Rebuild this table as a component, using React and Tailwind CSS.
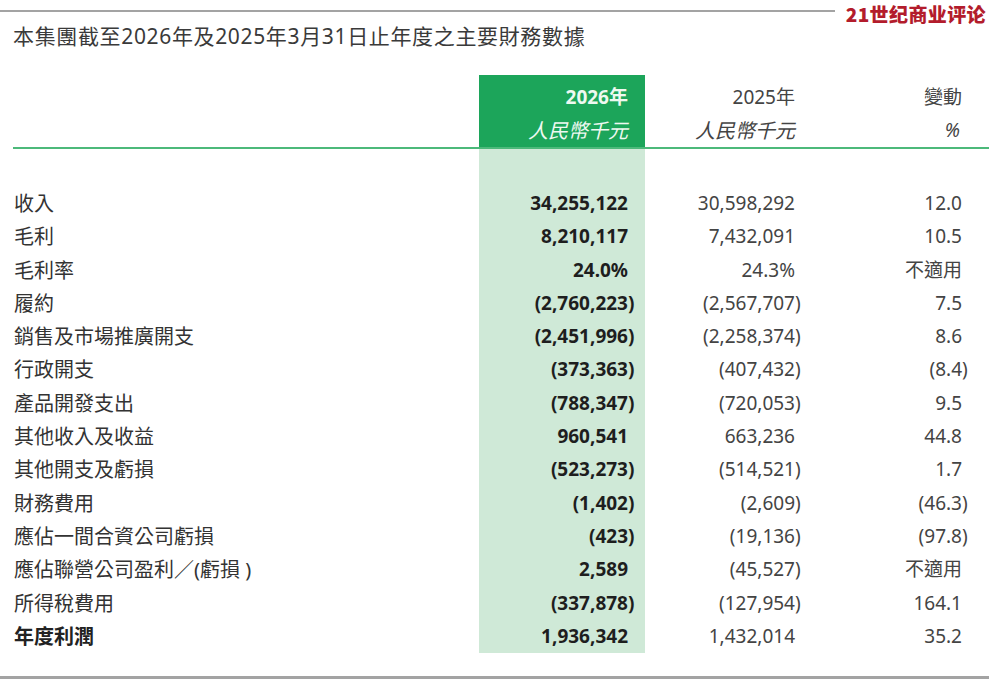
import React from "react";

const cols = "grid grid-cols-[466px_166px_167px_167px]";

const rows = [
  ["收入", "34,255,122", "30,598,292", "12.0"],
  ["毛利", "8,210,117", "7,432,091", "10.5"],
  ["毛利率", "24.0%", "24.3%", "不適用"],
  ["履約", "(2,760,223)", "(2,567,707)", "7.5"],
  ["銷售及市場推廣開支", "(2,451,996)", "(2,258,374)", "8.6"],
  ["行政開支", "(373,363)", "(407,432)", "(8.4)"],
  ["產品開發支出", "(788,347)", "(720,053)", "9.5"],
  ["其他收入及收益", "960,541", "663,236", "44.8"],
  ["其他開支及虧損", "(523,273)", "(514,521)", "1.7"],
  ["財務費用", "(1,402)", "(2,609)", "(46.3)"],
  ["應佔一間合資公司虧損", "(423)", "(19,136)", "(97.8)"],
  ["應佔聯營公司盈利／(虧損 )", "2,589", "(45,527)", "不適用"],
  ["所得稅費用", "(337,878)", "(127,954)", "164.1"],
  ["年度利潤", "1,936,342", "1,432,014", "35.2", true],
];

// closing paren hangs past the column edge, like in the printed report
function Num({ value }) {
  if (value.endsWith(")")) {
    return (
      <>
        {value.slice(0, -1)}
        <span className="inline-block w-0">)</span>
      </>
    );
  }
  return value;
}

export default function App() {
  return (
    <div className="w-[989px] h-[680px] bg-white overflow-hidden flex flex-col font-['Noto_Sans','Noto_Sans_CJK_TC',sans-serif] text-[#333]">
      {/* top rule + masthead */}
      <div className="flex items-start h-[24px] pr-[3px]">
        <div className="flex-1 mt-[10px] h-[2px] bg-[#a3a3a3]" />
        <span className="ml-[11px] mt-[4px] shrink-0 text-[19px] leading-[20px] font-black tracking-[0.4px] text-[#b31c2c] font-['Noto_Sans_CJK_SC',sans-serif]">
          21世纪商业评论
        </span>
      </div>

      <div className="pl-[13px] text-[21px] leading-[24px] tracking-[0.65px] text-[#3a3a3a]">
        本集團截至2026年及2025年3月31日止年度之主要財務數據
      </div>

      <div className="mt-[27px] pl-[13px]">
        {/* header */}
        <div className={`${cols} border-b-2 border-[#4cb97a]`}>
          <div />
          <div className="bg-[#1ca55a] pt-[6px] pr-[17px] text-right text-[#eef9f1]">
            <div className="h-[33px] leading-[33px] text-[19px] font-bold">2026年</div>
            <div className="h-[33px] leading-[33px] text-[20px] italic">人民幣千元</div>
          </div>
          <div className="pt-[6px] pr-[17px] text-right text-[#444]">
            <div className="h-[33px] leading-[33px] text-[19px]">2025年</div>
            <div className="h-[33px] leading-[33px] text-[20px] italic">人民幣千元</div>
          </div>
          <div className="pt-[6px] pr-[17px] text-right text-[#444]">
            <div className="h-[33px] leading-[33px] text-[19px]">變動</div>
            <div className="h-[33px] leading-[33px] text-[19px] italic pr-[2px]">%</div>
          </div>
        </div>

        {/* body */}
        <div className={`${cols} h-[38px]`}>
          <div />
          <div className="bg-[#cfe9d7]" />
        </div>
        {rows.map(([label, a, b, c, total]) => (
          <div key={label} className={`${cols} h-[33.3px] items-center`}>
            <div className={`pl-[1px] text-[20px] leading-[33.3px] ${total ? "font-bold text-[#222]" : ""}`}>
              {label}
            </div>
            <div className="bg-[#cfe9d7] h-full leading-[33.3px] pr-[17px] text-right text-[19px] font-bold text-[#1e1e1e]">
              <Num value={a} />
            </div>
            <div className="pr-[17px] text-right text-[19px] leading-[33.3px] text-[#444]">
              <Num value={b} />
            </div>
            <div className="pr-[17px] text-right text-[19px] leading-[33.3px] text-[#444]">
              <Num value={c} />
            </div>
          </div>
        ))}
      </div>

      <div className="mt-auto mb-[1px] h-[3px] bg-[#a3a3a3]" />
    </div>
  );
}
